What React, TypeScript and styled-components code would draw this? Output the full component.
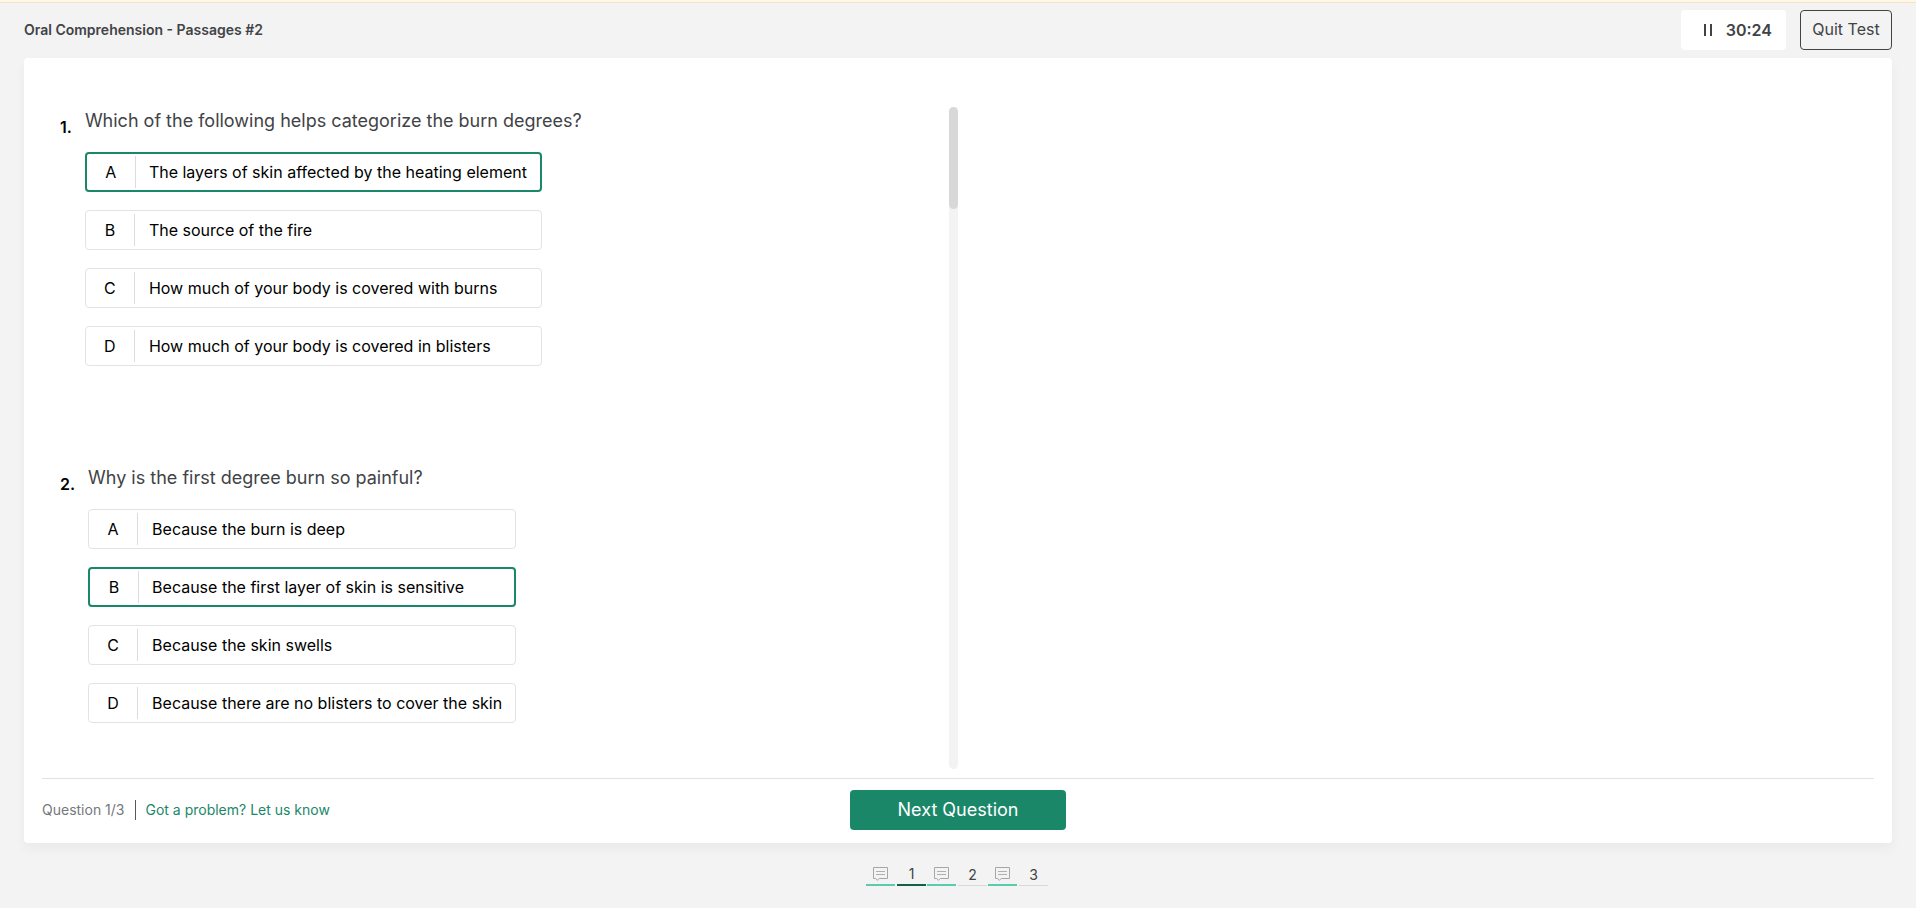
import React, { useState } from "react";
import styled, { createGlobalStyle } from "styled-components";

const GlobalStyle = createGlobalStyle`
  *, *::before, *::after { box-sizing: border-box; }
  body {
    margin: 0;
    background: #f3f3f3;
    color: #000;
    font-family: Inter, "Liberation Sans", sans-serif;
    font-size: 16px;
  }
  button { font-family: inherit; cursor: pointer; }
`;

const Page = styled.div`
  display: flex;
  flex-direction: column;
  height: 100vh;
  min-height: 600px;
  border-top: 2px solid #fff8e6;
`;

const Header = styled.header`
  display: flex;
  align-items: center;
  gap: 14px;
  padding: 7px 24px 8px;
  border-top: 1px solid #f3e3c6;
`;

const Title = styled.h1`
  flex: 1;
  margin: 0;
  color: #414346;
  font-size: 14px;
  font-weight: 600;
  line-height: 20px;
`;

const Timer = styled.button`
  display: flex;
  align-items: center;
  justify-content: flex-end;
  gap: 14px;
  width: 105px;
  height: 40px;
  padding: 0 14px 0 0;
  border: 0;
  border-radius: 4px;
  background: #fff;
  color: #414346;
  font-size: 16px;
  font-weight: 600;
`;

const QuitButton = styled.button`
  height: 40px;
  width: 92px;
  padding: 0 0 2px;
  border: 1px solid #414346;
  border-radius: 4px;
  background: transparent;
  color: #414346;
  font-size: 16px;
`;

const Card = styled.main`
  display: flex;
  flex: 1;
  flex-direction: column;
  min-height: 0;
  margin: 0 24px;
  padding: 49px 18px 0;
  border-radius: 4px;
  background: #fff;
  box-shadow: 0 6px 12px rgba(0, 0, 0, 0.04);
`;

const Panes = styled.div`
  display: flex;
  flex: 1;
  min-height: 0;
  margin-bottom: 9px;
`;

const QuestionPane = styled.section`
  display: flex;
  flex: 1;
  min-width: 0;
`;

const PassagePane = styled.section`
  flex: 1;
`;

const QuestionList = styled.ol`
  display: flex;
  flex: 1;
  flex-direction: column;
  gap: 98px;
  margin: 0;
  padding: 0 0 0 18px;
  overflow: hidden;
  list-style: none;
`;

const ScrollTrack = styled.div`
  width: 9px;
  border-radius: 5px;
  background: #f3f3f3;
`;

const ScrollThumb = styled.div`
  height: 102px;
  border-radius: 5px;
  background: #d8d8d8;
`;

const QuestionItem = styled.li`
  display: flex;
  align-items: flex-start;
  gap: 13px;
`;

const QuestionNumber = styled.span`
  padding-top: 10px;
  font-weight: 600;
  line-height: 20px;
`;

const QuestionBody = styled.fieldset`
  display: flex;
  flex-direction: column;
  margin: 0;
  padding: 0;
  border: 0;
`;

const Prompt = styled.legend`
  padding: 2px 0 19px;
  color: #414346;
  font-size: 18px;
  line-height: 24px;
`;

const Options = styled.div`
  display: flex;
  flex-direction: column;
  align-self: flex-start;
  gap: 18px;
`;

const Option = styled.label<{ $selected: boolean }>`
  display: flex;
  align-items: center;
  height: 40px;
  border: ${(p) => (p.$selected ? "2px solid #1b8769" : "1px solid #e3e3e3")};
  border-radius: 4px;
  background: #fff;
  line-height: 20px;
  cursor: pointer;
`;

const HiddenRadio = styled.input`
  appearance: none;
  width: 0;
  height: 0;
  margin: 0;
`;

const Letter = styled.span`
  width: 49px;
  padding: 6px 0;
  border-right: 1px solid #dcdcdc;
  text-align: center;
`;

const OptionText = styled.span<{ $selected: boolean }>`
  padding: 0 13px 0 ${(p) => (p.$selected ? 13 : 14)}px;
  white-space: nowrap;
`;

const Footer = styled.footer`
  display: grid;
  grid-template-columns: 1fr 216px 1fr;
  align-items: center;
  padding: 11px 0 13px;
  border-top: 1px solid #e2e2e2;
`;

const Status = styled.div`
  display: flex;
  align-items: center;
  color: #76787b;
  font-size: 14px;
  line-height: 20px;
`;

const ProblemLink = styled.a`
  margin-left: 10px;
  padding-left: 10px;
  border-left: 1px solid #55585c;
  color: #1b8769;
  text-decoration: none;
`;

const NextButton = styled.button`
  height: 40px;
  padding: 0 0 2px;
  border: 0;
  border-radius: 4px;
  background: #1b8769;
  color: #fff;
  font-size: 18px;
`;

const Pager = styled.nav`
  display: flex;
  justify-content: center;
  gap: 1px;
  height: 65px;
  padding: 20px 2px 0 0;
`;

const PagerGroup = styled.div`
  display: flex;
  gap: 2px;
`;

const PagerButton = styled.button<{ $line: string; $thick?: boolean }>`
  display: flex;
  align-items: center;
  justify-content: center;
  width: 29px;
  height: 23px;
  padding: 0;
  border: 0;
  border-bottom: ${(p) => (p.$thick ? 2 : 1)}px solid ${(p) => p.$line};
  background: transparent;
  color: #414346;
  font-size: 14px;
`;

const PauseIcon = () => (
  <svg width="8" height="12" viewBox="0 0 8 12" fill="#414346" aria-hidden="true">
    <rect x="0" y="0" width="2" height="12" />
    <rect x="6" y="0" width="2" height="12" />
  </svg>
);

const PassageIcon = () => (
  <svg width="15" height="14" viewBox="0 0 15 14" fill="none" aria-hidden="true">
    <path d="M.5 .5H14.5V11.5H6.2L4.4 13.4L2.8 11.5H.5Z" stroke="#a6a6a6" />
    <path d="M3 4.5H12M3 7.5H12" stroke="#b0b0b0" />
  </svg>
);

const questions = [
  {
    prompt: "Which of the following helps categorize the burn degrees?",
    answer: 0,
    options: [
      "The layers of skin affected by the heating element",
      "The source of the fire",
      "How much of your body is covered with burns",
      "How much of your body is covered in blisters",
    ],
  },
  {
    prompt: "Why is the first degree burn so painful?",
    answer: 1,
    options: [
      "Because the burn is deep",
      "Because the first layer of skin is sensitive",
      "Because the skin swells",
      "Because there are no blisters to cover the skin",
    ],
  },
];

const pages = [1, 2, 3];

export default function App() {
  const [answers, setAnswers] = useState(questions.map((q) => q.answer));

  const choose = (question: number, option: number) =>
    setAnswers(answers.map((a, i) => (i === question ? option : a)));

  return (
    <>
      <GlobalStyle />
      <Page>
        <Header>
          <Title>Oral Comprehension - Passages #2</Title>
          <Timer type="button">
            <PauseIcon />
            30:24
          </Timer>
          <QuitButton type="button">Quit Test</QuitButton>
        </Header>
        <Card>
          <Panes>
            <QuestionPane>
              <QuestionList>
                {questions.map((q, qi) => (
                  <QuestionItem key={q.prompt}>
                    <QuestionNumber>{qi + 1}.</QuestionNumber>
                    <QuestionBody>
                      <Prompt>{q.prompt}</Prompt>
                      <Options>
                        {q.options.map((text, oi) => {
                          const selected = answers[qi] === oi;
                          return (
                            <Option key={text} $selected={selected}>
                              <HiddenRadio
                                type="radio"
                                name={`question-${qi + 1}`}
                                checked={selected}
                                onChange={() => choose(qi, oi)}
                              />
                              <Letter>{"ABCD"[oi]}</Letter>
                              <OptionText $selected={selected}>{text}</OptionText>
                            </Option>
                          );
                        })}
                      </Options>
                    </QuestionBody>
                  </QuestionItem>
                ))}
              </QuestionList>
              <ScrollTrack>
                <ScrollThumb />
              </ScrollTrack>
            </QuestionPane>
            <PassagePane aria-label="Passage" />
          </Panes>
          <Footer>
            <Status>
              Question 1/3
              <ProblemLink href="#report">Got a problem? Let us know</ProblemLink>
            </Status>
            <NextButton type="button">Next Question</NextButton>
          </Footer>
        </Card>
        <Pager aria-label="Questions">
          {pages.map((n) => (
            <PagerGroup key={n}>
              <PagerButton type="button" aria-label={`Passage ${n}`} $line="#5acbad" $thick>
                <PassageIcon />
              </PagerButton>
              <PagerButton type="button" $line={n === 1 ? "#0f6249" : "#d8d8d8"} $thick={n === 1}>
                {n}
              </PagerButton>
            </PagerGroup>
          ))}
        </Pager>
      </Page>
    </>
  );
}
